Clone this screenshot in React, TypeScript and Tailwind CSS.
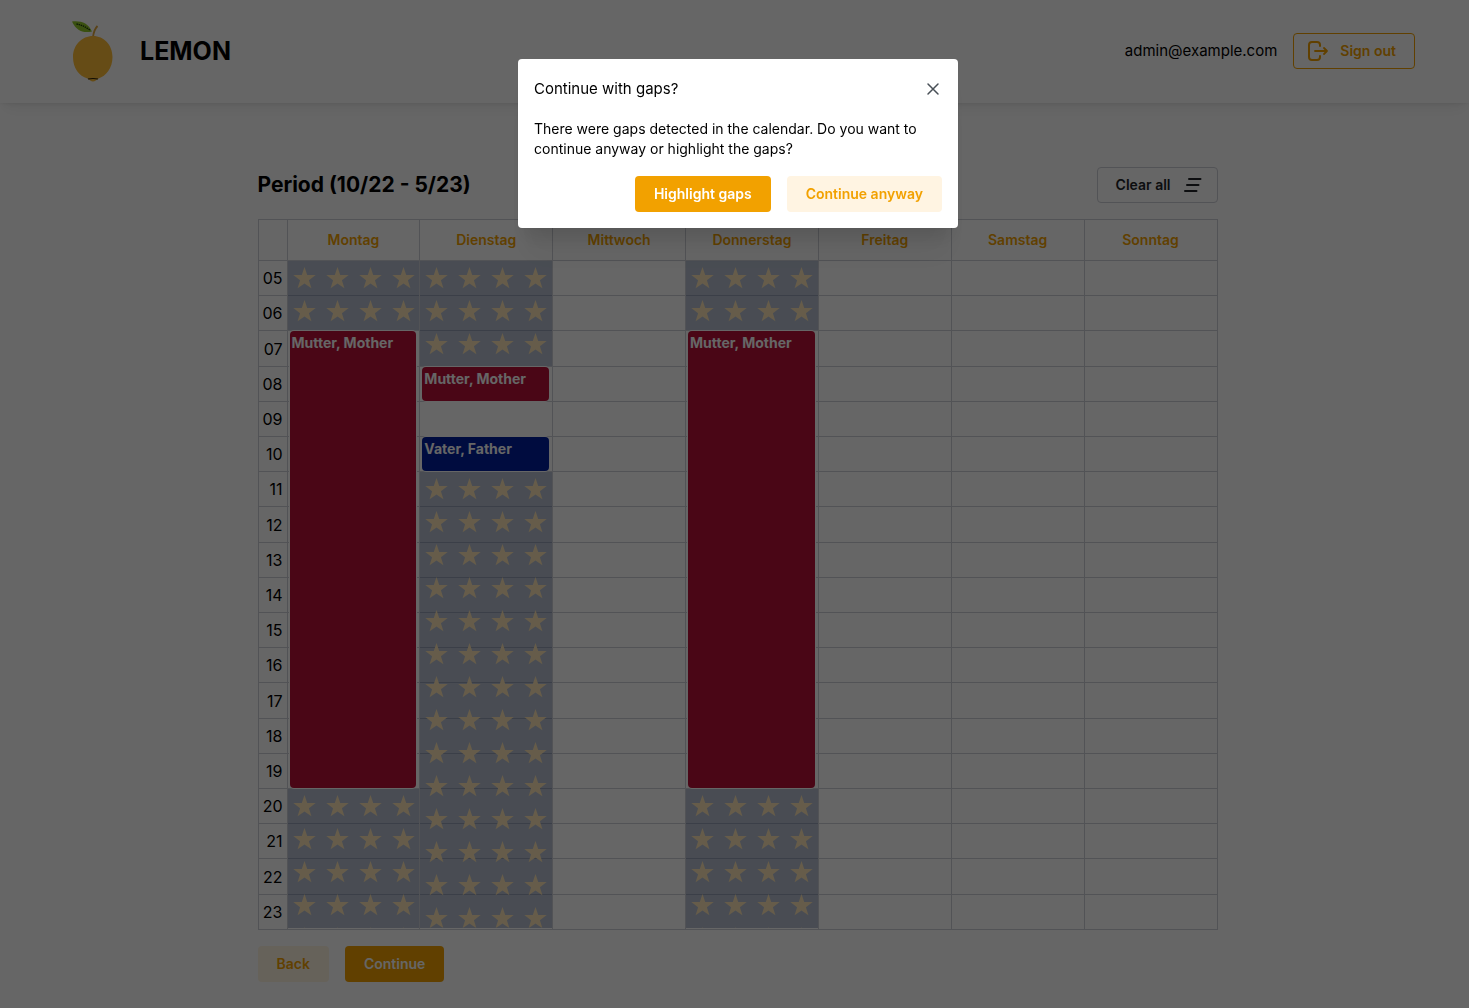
import { useId } from "react";

const days = ["Montag", "Dienstag", "Mittwoch", "Donnerstag", "Freitag", "Samstag", "Sonntag"];
const hours = Array.from({ length: 19 }, (_, i) => String(i + 5).padStart(2, "0"));
const firstHour = 5;

type Slot = { day: number; from: number; to: number };
type Shift = Slot & { label: string; tone: string };

const closed: Slot[] = [
  { day: 1, from: 5, to: 7 },
  { day: 1, from: 20, to: 24 },
  { day: 2, from: 5, to: 8 },
  { day: 2, from: 11, to: 24 },
  { day: 4, from: 5, to: 7 },
  { day: 4, from: 20, to: 24 },
];

const shifts: Shift[] = [
  { day: 1, from: 7, to: 20, label: "Mutter, Mother", tone: "bg-[#b80f39]" },
  { day: 2, from: 8, to: 9, label: "Mutter, Mother", tone: "bg-[#b80f39]" },
  { day: 2, from: 10, to: 11, label: "Vater, Father", tone: "bg-[#00209f]" },
  { day: 4, from: 7, to: 20, label: "Mutter, Mother", tone: "bg-[#b80f39]" },
];

const place = (s: Slot) => ({
  gridColumn: s.day,
  gridRow: `${s.from - firstHour + 1} / ${s.to - firstHour + 1}`,
});

function LemonLogo() {
  return (
    <svg className="mt-0.5 h-16 w-12" viewBox="0 0 48 64" aria-hidden="true">
      <path d="M25 17C25.500 13 26.500 9 29.500 6" fill="none" stroke="#e0a63a" strokeWidth="1.800" />
      <path
        d="M25 16C36 16 44.500 25 44.500 37C44.500 48 38 56 30.500 58.500C28.500 59.500 27 61.500 25 61.500C23 61.500 21.500 59.500 19.500 58.500C11 56 5 48 5 37C5 25 14 16 25 16Z"
        fill="#ffbe38"
      />
      <path d="M20 59Q25 58 30 59" fill="none" stroke="#2b2008" strokeWidth="1.200" />
      <path d="M4 1.500C13 .5 20 3 24 11.500C15 13.500 8 10.500 4 1.500Z" fill="#92c92a" />
      <path d="M8.500 4Q15 5 22 10" fill="none" stroke="#1f3b0c" strokeWidth="1.400" strokeDasharray="1.500 .7" />
    </svg>
  );
}

function SignOutIcon() {
  return (
    <svg className="size-[22px]" viewBox="0 0 22 22" fill="none" stroke="currentColor" strokeWidth="2" strokeLinecap="round" strokeLinejoin="round" aria-hidden="true">
      <path d="M13 6V5a3 3 0 0 0-3-3H5a3 3 0 0 0-3 3v12a3 3 0 0 0 3 3h5a3 3 0 0 0 3-3v-1" />
      <path d="M8 11h12M17 8l3 3-3 3" strokeWidth="1.800" />
    </svg>
  );
}

function ClearIcon() {
  return (
    <svg className="size-5" viewBox="0 0 20 20" fill="none" stroke="currentColor" strokeWidth="2" strokeLinecap="round" aria-hidden="true">
      <path d="M6 4h11.500M4 10h11.500M2 16h11.500" />
    </svg>
  );
}

function Stars() {
  const id = useId();
  return (
    <svg className="size-full" aria-hidden="true">
      <defs>
        <pattern id={id} width="33" height="33" patternUnits="userSpaceOnUse">
          <polygon
            points="16.5,6 19.2,14.100 27.700,14.100 20.900,19.200 23.400,27.300 16.500,22.400 9.600,27.300 12.100,19.200 5.300,14.100 13.800,14.100"
            fill="#ffe7b8"
          />
        </pattern>
      </defs>
      <rect width="100%" height="100%" fill={`url(#${id})`} />
    </svg>
  );
}

function Calendar() {
  return (
    <div className="relative">
      <table className="h-[711px] w-full table-fixed border-collapse border border-[#cdcfd6]">
        <colgroup>
          <col className="w-[29px]" />
          {days.map((d) => (
            <col key={d} />
          ))}
        </colgroup>
        <thead>
          <tr className="h-[41px]">
            <td className="border border-[#cdcfd6]" />
            {days.map((d) => (
              <th key={d} scope="col" className="border border-[#cdcfd6] text-sm font-semibold text-[#f2a100]">
                {d}
              </th>
            ))}
          </tr>
        </thead>
        <tbody>
          {hours.map((h) => (
            <tr key={h}>
              <th scope="row" className="border border-[#cdcfd6] p-0 pr-1 text-right text-base leading-6 font-normal">
                {h}
              </th>
              {days.map((d) => (
                <td key={d} className="border border-[#cdcfd6] p-0" />
              ))}
            </tr>
          ))}
        </tbody>
      </table>
      <div className="absolute top-[42px] right-0 bottom-0 left-[30px] grid grid-cols-7 grid-rows-[repeat(19,minmax(0,1fr))]">
        {closed.map((s) => (
          <div key={`${s.day}-${s.from}`} style={place(s)} className={`mr-px bg-[#0d2a63]/30 ${s.to === 24 ? "mb-0.5" : "mb-px"}`}>
            <Stars />
          </div>
        ))}
        {shifts.map((s) => (
          <div
            key={`${s.day}-${s.from}`}
            style={place(s)}
            className={`mr-1 mb-px ml-0.5 rounded px-0.5 pt-0.5 text-sm font-bold text-white ring-1 ring-white ${s.tone}`}
          >
            {s.label}
          </div>
        ))}
      </div>
    </div>
  );
}

const button = "flex h-9 items-center rounded px-[18px] text-sm font-semibold border border-transparent";

export default function App() {
  return (
    <div className="min-h-screen bg-white font-['Inter',sans-serif] text-black">
      <header className="flex h-[103px] items-center justify-between pr-[54px] pb-0.5 pl-[68px] shadow-[0_1px_3px_rgba(0,0,0,0.05),0_10px_15px_-5px_rgba(0,0,0,0.05),0_7px_7px_-5px_rgba(0,0,0,0.04)]">
        <div className="flex items-center gap-6">
          <LemonLogo />
          <h1 className="text-[25px] leading-9 font-bold">LEMON</h1>
        </div>
        <div className="flex items-center gap-4">
          <span className="text-[15px] leading-6">admin@example.com</span>
          <button type="button" className="flex h-9 items-center gap-[11px] rounded border border-[#f2a100] pr-[18px] pl-[13px] text-sm font-semibold text-[#f2a100]">
            <SignOutIcon />
            Sign out
          </button>
        </div>
      </header>

      <main className="pt-16 pb-[26px] pl-1.5">
        <div className="mx-auto flex max-w-[960px] flex-col gap-4">
          <div className="flex items-center justify-between">
            <h2 className="text-[21px] leading-9 font-bold">Period (10/22 - 5/23)</h2>
            <button type="button" className="flex h-9 items-center gap-3 rounded border border-[#cdd0d6] pr-3.5 pl-[18px] text-sm font-semibold text-[#212529]">
              Clear all
              <ClearIcon />
            </button>
          </div>
          <Calendar />
          <div className="flex gap-4">
            <button type="button" className={`${button} bg-[#fff4e2] text-[#f2a100]`}>Back</button>
            <button type="button" className={`${button} bg-[#f2a100] text-white`}>Continue</button>
          </div>
        </div>
      </main>

      <div className="fixed inset-0 flex items-start justify-center bg-black/60 pt-[59px] pl-[7px]">
        <div
          role="dialog"
          aria-modal="true"
          aria-labelledby="gaps-title"
          className="w-[440px] rounded bg-white p-4 shadow-[0_1px_3px_rgba(0,0,0,0.05),0_36px_28px_-7px_rgba(0,0,0,0.05),0_17px_17px_-7px_rgba(0,0,0,0.1)]"
        >
          <div className="flex items-center justify-between">
            <h2 id="gaps-title" className="text-[15px] leading-7">Continue with gaps?</h2>
            <button type="button" aria-label="Close" className="-mr-[5px] flex size-7 items-center justify-center text-[#495057]">
              <svg className="size-4" viewBox="0 0 16 16" fill="none" stroke="currentColor" strokeWidth="1.500" strokeLinecap="round" aria-hidden="true">
                <path d="M3 3l10 10M13 3l-10 10" />
              </svg>
            </button>
          </div>
          <p className="mt-4 text-sm leading-5">
            There were gaps detected in the calendar. Do you want to continue anyway or highlight the gaps?
          </p>
          <div className="mt-[17px] flex justify-end gap-4">
            <button type="button" className={`${button} bg-[#f2a100] text-white`}>Highlight gaps</button>
            <button type="button" className={`${button} bg-[#fff4e2] text-[#f2a100]`}>Continue anyway</button>
          </div>
        </div>
      </div>
    </div>
  );
}
